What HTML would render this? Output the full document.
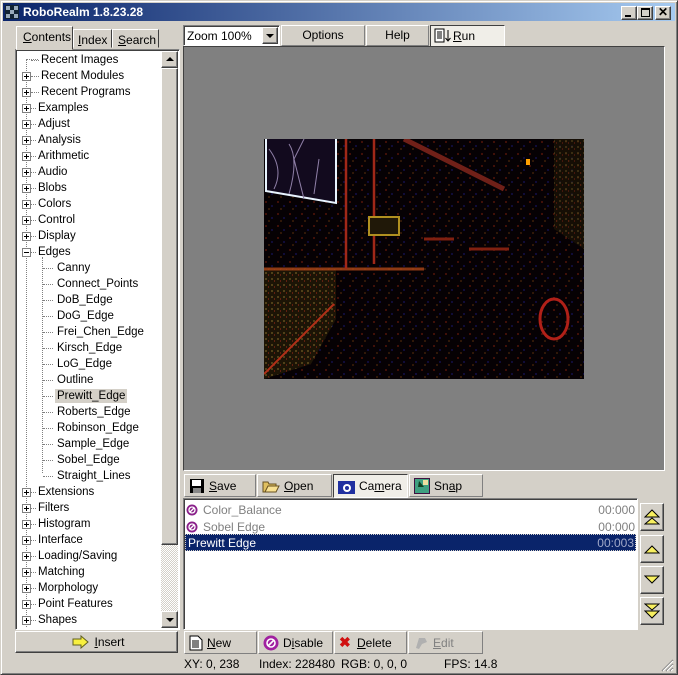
<!DOCTYPE html>
<html><head><style>
*{box-sizing:border-box;margin:0;padding:0}
body{width:678px;height:675px;overflow:hidden;background:#d4d0c8;font-family:"Liberation Sans",sans-serif;font-size:11px;color:#000;position:relative}
.a{position:absolute}
.win{left:0;top:0;width:678px;height:675px;border:1px solid;border-color:#d4d0c8 #404040 #404040 #d4d0c8;box-shadow:inset 1px 1px #fff,inset -1px -1px #808080}
.title{left:3px;top:3px;width:672px;height:18px;background:linear-gradient(90deg,#0a246a,#a6caf0);color:#fff;font-weight:bold;font-size:12px;line-height:18px;padding-left:20px}
.raised{border:1px solid;border-color:#fff #404040 #404040 #fff;box-shadow:inset -1px -1px #808080;background:#d4d0c8}
.sunk{border:1px solid;border-color:#808080 #fff #fff #808080;box-shadow:inset 1px 1px #404040}
.tb{border-color:#fff #808080 #808080 #fff;box-shadow:none}
.btn{display:flex;align-items:center;gap:4px;padding-left:4px;font-size:12px}
.t{position:absolute;font-size:11.5px;white-space:nowrap;line-height:14px}
.pb{position:absolute;width:9px;height:9px;border:1px solid #808080;background:#fff}
.pb:before{content:"";position:absolute;left:1px;top:3px;width:5px;height:1px;background:#000}
.pl:after{content:"";position:absolute;left:3px;top:1px;width:1px;height:5px;background:#000}
.dh{position:absolute;height:0;border-top:1px dotted #808080}
.dv{position:absolute;width:0;border-left:1px dotted #808080}
.sb{position:absolute;left:640px;width:24px;height:28px}
u{text-decoration:underline}
</style></head><body>
<div class="a win"></div>
<div class="a title">RoboRealm 1.8.23.28</div>
<svg class="a" style="left:5px;top:5px" width="14" height="14"><rect width="14" height="14" fill="#123"/><rect x="1" y="1" width="4" height="4" fill="#9ab"/><rect x="9" y="1" width="4" height="4" fill="#9ab"/><rect x="5" y="5" width="4" height="4" fill="#9ab"/><rect x="1" y="9" width="4" height="4" fill="#9ab"/><rect x="9" y="9" width="4" height="4" fill="#9ab"/></svg>
<div class="a raised" style="left:621px;top:6px;width:16px;height:14px"><div class="a" style="left:3px;top:8px;width:6px;height:2px;background:#000"></div></div>
<div class="a raised" style="left:637px;top:6px;width:16px;height:14px"><div class="a" style="left:3px;top:1px;width:9px;height:9px;border:1px solid #000;border-top-width:2px"></div></div>
<div class="a raised" style="left:655px;top:6px;width:16px;height:14px;font-weight:bold;font-size:12px;line-height:11px;text-align:center">✕</div>

<!-- tabs -->
<div class="a" style="left:16px;top:26px;width:57px;height:24px;border:1px solid;border-color:#fff #404040 transparent #fff;background:#d4d0c8;z-index:2;font-size:12px;padding:3px 0 0 6px"><u>C</u>ontents</div>
<div class="a" style="left:73px;top:29px;width:39px;height:19px;border:1px solid;border-color:#fff #404040 transparent #fff;font-size:12px;padding:3px 0 0 4px"><u>I</u>ndex</div>
<div class="a" style="left:112px;top:29px;width:47px;height:19px;border:1px solid;border-color:#fff #404040 transparent #fff;font-size:12px;padding:3px 0 0 5px"><u>S</u>earch</div>
<div class="a sunk" style="left:15px;top:49px;width:165px;height:581px;background:#fff"></div>
<!-- scrollbar -->
<div class="a" style="left:161px;top:51px;width:17px;height:577px;background:repeating-conic-gradient(#d4d0c8 0 25%,#fff 0 50%) 0 0/2px 2px"></div>
<div class="a raised" style="left:161px;top:51px;width:17px;height:17px"><div class="a" style="left:4px;top:5px;border:4px solid transparent;border-bottom:4px solid #000;border-top:0"></div></div>
<div class="a raised" style="left:161px;top:68px;width:17px;height:477px"></div>
<div class="a raised" style="left:161px;top:611px;width:17px;height:17px"><div class="a" style="left:4px;top:6px;border:4px solid transparent;border-top:4px solid #000;border-bottom:0"></div></div>
<div class="a" style="left:17px;top:51px;width:144px;height:577px;overflow:hidden">
<div class="dv" style="left:9px;top:8px;height:570px"></div>
<div class="dv" style="left:25px;top:206px;height:216px"></div>
<div class="dh" style="left:9px;top:8px;width:12px"></div>
</div>
<div id="tree"></div>
<script>
var items=[["Recent Images",0,0,41],["Recent Modules",0,1,41],["Recent Programs",0,1,41],["Examples",0,1,38],["Adjust",0,1,38],["Analysis",0,1,38],["Arithmetic",0,1,38],["Audio",0,1,38],["Blobs",0,1,38],["Colors",0,1,38],["Control",0,1,38],["Display",0,1,38],["Edges",0,2,38],
["Canny",1],["Connect_Points",1],["DoB_Edge",1],["DoG_Edge",1],["Frei_Chen_Edge",1],["Kirsch_Edge",1],["LoG_Edge",1],["Outline",1],["Prewitt_Edge",1,3],["Roberts_Edge",1],["Robinson_Edge",1],["Sample_Edge",1],["Sobel_Edge",1],["Straight_Lines",1],
["Extensions",0,1,38],["Filters",0,1,38],["Histogram",0,1,38],["Interface",0,1,38],["Loading/Saving",0,1,38],["Matching",0,1,38],["Morphology",0,1,38],["Point Features",0,1,38],["Shapes",0,1,38]];
var h="";items.forEach(function(it,i){var y=53+i*16;
if(it[1]==1){h+='<div class="dh" style="left:43px;top:'+(y+7)+'px;width:10px"></div>';
h+='<div class="t" style="left:55px;top:'+y+'px;padding:0 2px;'+(it[2]==3?'background:#d4d0c8;':'')+'">'+it[0]+'</div>';}
else{if(it[2])h+='<div class="pb '+(it[2]==1?'pl':'')+'" style="left:22px;top:'+(y+3)+'px"></div>';
h+='<div class="dh" style="left:31px;top:'+(y+7)+'px;width:'+(it[3]-33)+'px"></div>';
h+='<div class="t" style="left:'+it[3]+'px;top:'+y+'px">'+it[0]+'</div>';}});
document.getElementById("tree").innerHTML=h;
</script>
<div class="a raised btn" style="left:15px;top:631px;width:163px;height:22px;justify-content:center"><svg width="18" height="14"><path d="M1 4h8V1l7 6-7 6v-3H1z" fill="#f8f040" stroke="#606020"/></svg><span><u>I</u>nsert</span></div>

<!-- top toolbar -->
<div class="a sunk" style="left:183px;top:25px;width:97px;height:21px;background:#fff;font-size:12px;padding:3px 0 0 3px">Zoom 100%</div>
<div class="a raised" style="left:262px;top:27px;width:16px;height:17px"><div class="a" style="left:3px;top:6px;border:4px solid transparent;border-top:4px solid #000;border-bottom:0"></div></div>
<div class="a raised tb" style="left:281px;top:25px;width:84px;height:21px;font-size:12px;text-align:center;line-height:19px">Options</div>
<div class="a raised tb" style="left:366px;top:25px;width:63px;height:21px;font-size:12px;text-align:center;line-height:19px">Help</div>
<div class="a" style="left:430px;top:25px;width:75px;height:22px;background:#f0eee8;border:1px solid;border-color:#404040 #fff #fff #404040;font-size:12px;padding:3px 0 0 22px"><u>R</u>un</div>
<svg class="a" style="left:434px;top:28px" width="18" height="16"><rect x="1" y="1" width="9" height="13" fill="#fff" stroke="#000"/><path d="M3 4h5M3 6h5M3 8h5M3 10h5" stroke="#000"/><path d="M14 2v11M11.5 10l2.5 3 2.5-3" stroke="#000" fill="none"/></svg>

<!-- image area -->
<div class="a" style="left:183px;top:46px;width:482px;height:425px;background:#808080;border:1px solid;border-color:#404040 #fff #fff #404040"></div>
<svg class="a" style="left:264px;top:139px" width="320" height="240">
<defs><pattern id="n" width="12" height="12" patternUnits="userSpaceOnUse"><rect width="12" height="12" fill="#060104"/><rect x="1" y="2" width="2" height="2" fill="#401008"/><rect x="7" y="6" width="2" height="2" fill="#100c38"/><rect x="4" y="9" width="2" height="2" fill="#301808"/></pattern>
<pattern id="o" width="6" height="6" patternUnits="userSpaceOnUse"><rect width="6" height="6" fill="#1c1406"/><rect x="1" y="1" width="2" height="2" fill="#504018"/><rect x="4" y="3" width="1" height="2" fill="#602010"/></pattern></defs>
<rect width="320" height="240" fill="url(#n)"/>
<path d="M0 130h72v50l-25 45-47 15z" fill="url(#o)"/>
<path d="M290 0h30v110l-30-20z" fill="url(#o)" opacity=".7"/>
<path d="M0 130h160" stroke="#b04818" stroke-width="3" opacity=".8"/>
<path d="M2 0v52l70 12V0" stroke="#e8f4ff" stroke-width="2" fill="#120a1e"/>
<path d="M5 10q15 20 5 40M25 5q10 15 0 50M40 60l-10-40 10-20M50 55l5-35" stroke="#9080a8" fill="none"/>
<path d="M82 0v130M110 0v125" stroke="#a02818" stroke-width="2.5"/>
<path d="M140 0l100 50" stroke="#702018" stroke-width="5"/>
<ellipse cx="290" cy="180" rx="14" ry="20" stroke="#b02018" stroke-width="3" fill="none"/>
<rect x="105" y="78" width="30" height="18" stroke="#b09020" stroke-width="2" fill="#201808"/>
<path d="M160 100h30M205 110h40" stroke="#802010" stroke-width="3"/>
<rect x="262" y="20" width="4" height="6" fill="#ffa000"/>
<path d="M0 235l70-70" stroke="#b03018" stroke-width="2"/>
</svg>

<!-- module buttons -->
<div class="a raised tb btn" style="left:184px;top:474px;width:72px;height:23px"><svg width="16" height="16"><rect x="1" y="1" width="14" height="14" fill="#000"/><rect x="3" y="2" width="9" height="6" fill="#fff"/><rect x="4" y="10" width="8" height="5" fill="#888"/></svg><span><u>S</u>ave</span></div>
<div class="a raised tb btn" style="left:257px;top:474px;width:75px;height:23px"><svg width="18" height="16"><path d="M1 4h5l1 2h7v8H1z" fill="#e0c060" stroke="#665020"/><path d="M3 14l3-6h11l-3 6z" fill="#f8e090" stroke="#665020"/></svg><span><u>O</u>pen</span></div>
<div class="a btn" style="left:333px;top:474px;width:75px;height:24px;background:#f0eee8;border:1px solid;border-color:#404040 #fff #fff #404040"><svg width="17" height="15"><rect x="0" y="2" width="17" height="13" fill="#2030a0"/><circle cx="9" cy="9" r="4" fill="#fff"/><circle cx="9" cy="9" r="2" fill="#2030a0"/></svg><span>Ca<u>m</u>era</span></div>
<div class="a raised tb btn" style="left:409px;top:474px;width:74px;height:23px"><svg width="16" height="16"><rect x="0.5" y="0.5" width="15" height="15" fill="#40a080" stroke="#401040"/><path d="M5 3l5 6H4z" fill="#104020"/><rect x="9" y="2" width="5" height="5" fill="#f0e0a0"/></svg><span>Sn<u>a</u>p</span></div>

<!-- list -->
<div class="a sunk" style="left:183px;top:498px;width:455px;height:132px;background:#fff"></div>
<div class="a" style="left:186px;top:501px;font-size:12px;color:#808080;width:449px">
<div style="height:17px;display:flex;align-items:center"><svg width="12" height="12"><circle cx="6" cy="6" r="5.5" fill="#8a208a"/><circle cx="6" cy="6" r="3" fill="none" stroke="#fff" stroke-width="1.3"/><path d="M4 8l4-4" stroke="#fff" stroke-width="1.3"/></svg><span style="margin-left:5px;flex:1">Color_Balance</span><span>00:000</span></div>
<div style="height:17px;display:flex;align-items:center"><svg width="12" height="12"><circle cx="6" cy="6" r="5.5" fill="#8a208a"/><circle cx="6" cy="6" r="3" fill="none" stroke="#fff" stroke-width="1.3"/><path d="M4 8l4-4" stroke="#fff" stroke-width="1.3"/></svg><span style="margin-left:5px;flex:1">Sobel Edge</span><span>00:000</span></div>
</div>
<div class="a" style="left:185px;top:534px;width:451px;height:17px;background:#0a246a;color:#fff;font-size:12px;line-height:16px;padding-left:2px;border:1px dotted #d4d0c8">Prewitt Edge<span style="position:absolute;right:1px;color:#a0a8c8">00:003</span></div>

<div class="sb raised" style="top:503px"><svg class="a" style="left:3px;top:5px" width="16" height="16"><path d="M1 8l7-7 7 7z M1 15l7-6 7 6z" fill="#f8f060" stroke="#000"/></svg></div>
<div class="sb raised" style="top:535px"><svg class="a" style="left:3px;top:8px" width="16" height="10"><path d="M1 9l7-7 7 7z" fill="#f8f060" stroke="#000"/></svg></div>
<div class="sb raised" style="top:566px"><svg class="a" style="left:3px;top:8px" width="16" height="10"><path d="M1 1l7 7 7-7z" fill="#f8f060" stroke="#000"/></svg></div>
<div class="sb raised" style="top:597px"><svg class="a" style="left:3px;top:5px" width="16" height="16"><path d="M1 1l7 6 7-6z M1 8l7 7 7-7z" fill="#f8f060" stroke="#000"/></svg></div>

<!-- bottom buttons -->
<div class="a raised tb btn" style="left:184px;top:631px;width:73px;height:23px"><svg width="14" height="16"><path d="M1 1h8l4 4v10H1z" fill="#fff" stroke="#000"/><path d="M3 6h7M3 8h7M3 10h7M3 12h7" stroke="#000"/></svg><span><u>N</u>ew</span></div>
<div class="a raised tb btn" style="left:258px;top:631px;width:75px;height:23px"><svg width="16" height="16"><circle cx="8" cy="8" r="7.5" fill="#a020a0"/><circle cx="8" cy="8" r="4" fill="none" stroke="#fff" stroke-width="1.6"/><path d="M5 11l6-6" stroke="#fff" stroke-width="1.6"/></svg><span>D<u>i</u>sable</span></div>
<div class="a raised tb btn" style="left:334px;top:631px;width:73px;height:23px"><span style="color:#d01010;font-weight:bold;font-size:14px;width:14px">✖</span><span><u>D</u>elete</span></div>
<div class="a raised tb btn" style="left:408px;top:631px;width:75px;height:23px;color:#808080"><svg width="16" height="16"><path d="M6 3l6 0 2 4-5 2-3 5-3-1z" fill="#b0b0b0"/></svg><span><u>E</u>dit</span></div>

<!-- status -->
<div class="a" style="left:184px;top:657px;font-size:12px;white-space:pre">XY: 0, 238</div>
<div class="a" style="left:259px;top:657px;font-size:12px">Index: 228480</div>
<div class="a" style="left:341px;top:657px;font-size:12px">RGB: 0, 0, 0</div>
<div class="a" style="left:444px;top:657px;font-size:12px">FPS: 14.8</div>
<svg class="a" style="left:661px;top:659px" width="13" height="13"><path d="M12 1L1 12M12 5L5 12M12 9L9 12" stroke="#808080" stroke-width="1.3"/><path d="M12 2L2 12M12 6L6 12M12 10L10 12" stroke="#fff"/></svg>
</body></html>
